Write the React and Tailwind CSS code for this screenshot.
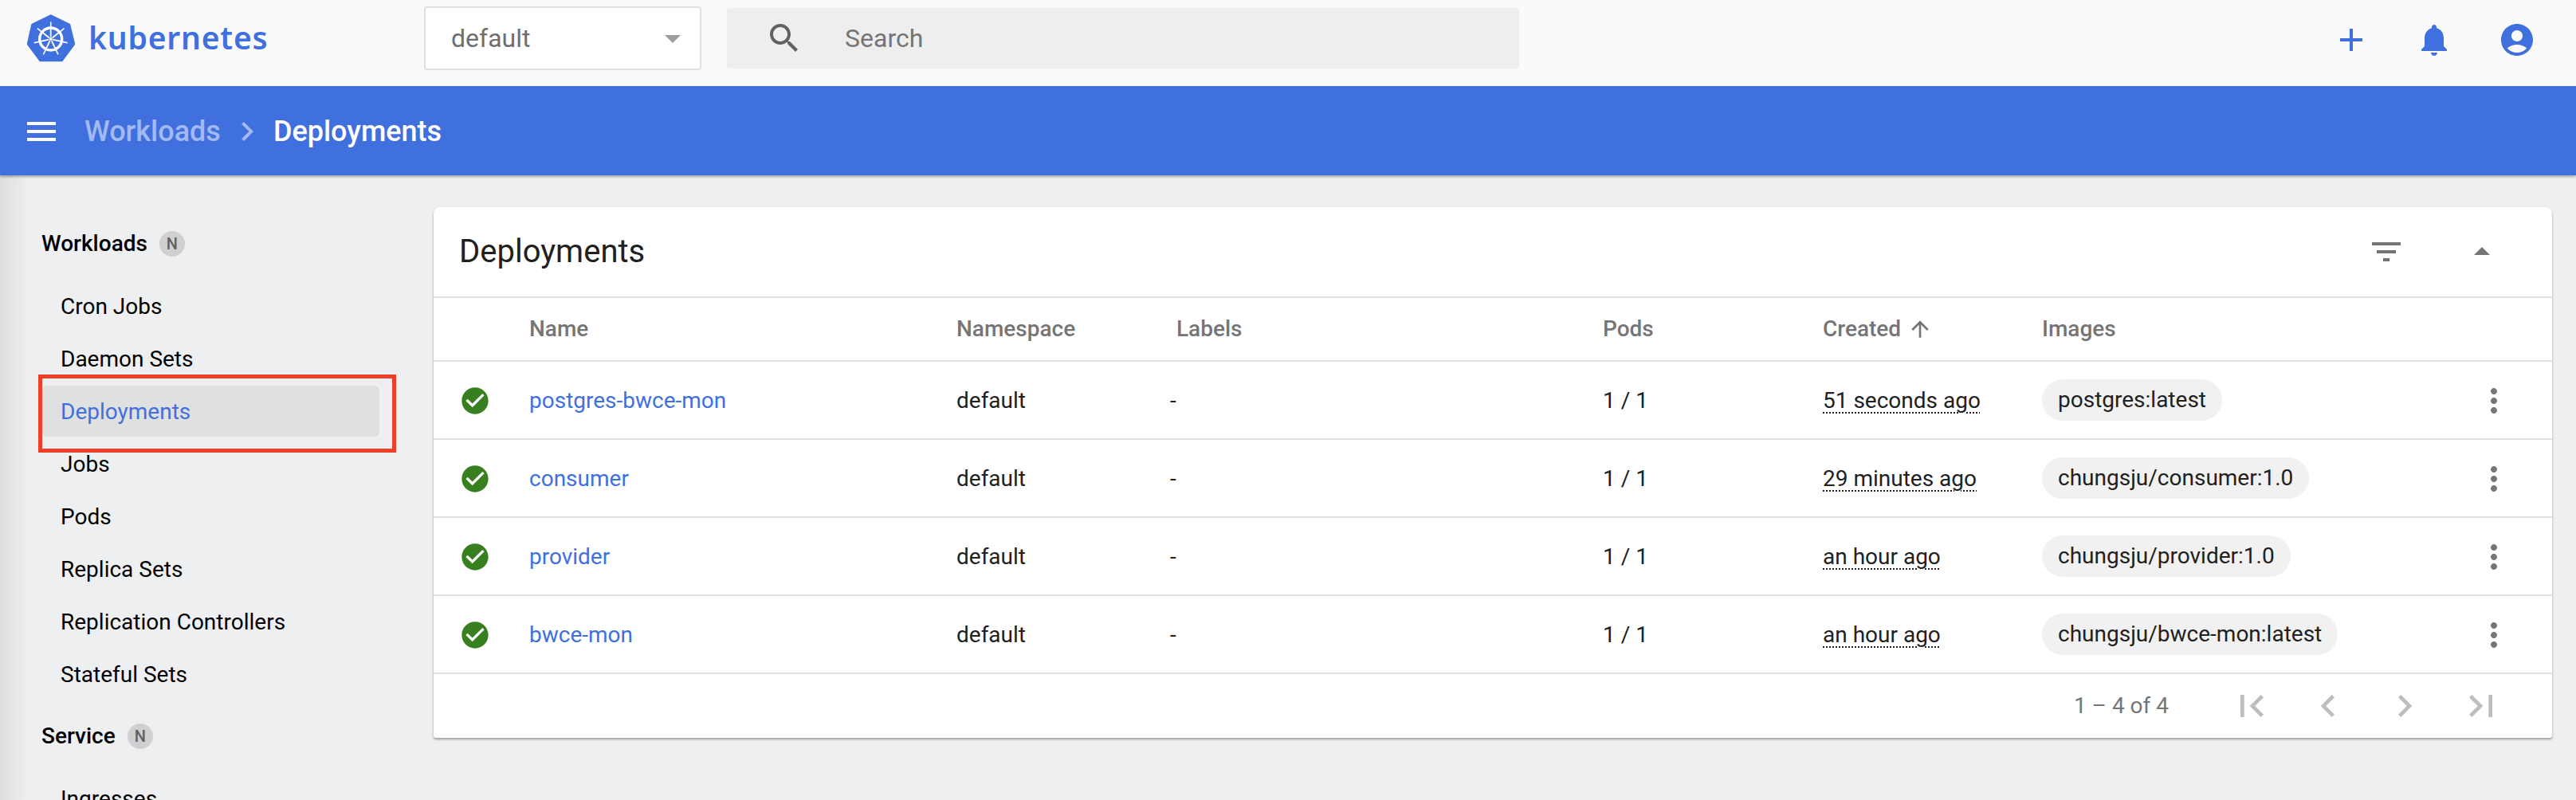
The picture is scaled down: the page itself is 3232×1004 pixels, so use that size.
// App.jsx
import React from "react";

const paths = {
  add: "M19 13h-6v6h-2v-6H5v-2h6V5h2v6h6v2z",
  bell: "M12 22c1.1 0 2-.9 2-2h-4c0 1.1.89 2 2 2zm6-6v-5c0-3.07-1.64-5.64-4.5-6.32V4c0-.83-.67-1.5-1.5-1.5s-1.5.67-1.5 1.5v.68C7.63 5.36 6 7.92 6 11v5l-2 2v1h16v-1l-2-2z",
  account: "M12 2C6.48 2 2 6.48 2 12s4.48 10 10 10 10-4.48 10-10S17.52 2 12 2zm0 4c1.93 0 3.5 1.57 3.5 3.5S13.93 13 12 13s-3.5-1.57-3.5-3.5S10.07 6 12 6zm0 14c-2.03 0-4.43-.82-6.14-2.88C7.55 15.8 9.68 15 12 15s4.45.8 6.14 2.12C16.43 19.18 14.03 20 12 20z",
  menu: "M3 18h18v-2H3v2zm0-5h18v-2H3v2zm0-7v2h18V6H3z",
  chevronRight: "M10 6L8.59 7.41 13.17 12l-4.58 4.59L10 18l6-6z",
  chevronLeft: "M15.41 7.41L14 6l-6 6 6 6 1.41-1.41L10.83 12z",
  search: "M15.5 14h-.79l-.28-.27C15.41 12.59 16 11.11 16 9.5 16 5.91 13.09 3 9.5 3S3 5.91 3 9.5 5.91 16 9.5 16c1.61 0 3.09-.59 4.23-1.57l.27.28v.79l5 4.99L20.49 19l-4.99-5zm-6 0C7.01 14 5 11.99 5 9.5S7.01 5 9.5 5 14 7.01 14 9.5 11.99 14 9.5 14z",
  filter: "M10 18h4v-2h-4v2zM3 6v2h18V6H3zm3 7h12v-2H6v2z",
  dropUp: "M7 14l5-5 5 5z",
  dropDown: "M7 10l5 5 5-5z",
  check: "M12 2C6.48 2 2 6.48 2 12s4.48 10 10 10 10-4.48 10-10S17.52 2 12 2zm-2 15l-5-5 1.41-1.41L10 14.17l7.59-7.59L19 8l-9 9z",
  more: "M12 8c1.1 0 2-.9 2-2s-.9-2-2-2-2 .9-2 2 .9 2 2 2zm0 2c-1.1 0-2 .9-2 2s.9 2 2 2 2-.9 2-2-.9-2-2-2zm0 6c-1.1 0-2 .9-2 2s.9 2 2 2 2-.9 2-2-.9-2-2-2z",
  arrowUp: "M4 12l1.41 1.41L11 7.83V20h2V7.83l5.58 5.59L20 12l-8-8-8 8z",
  first: "M18.41 16.59L13.82 12l4.59-4.59L17 6l-6 6 6 6zM6 6h2v12H6z",
  last: "M5.59 7.41L10.18 12l-4.59 4.59L7 18l6-6-6-6zM16 6h2v12h-2z",
};

function Icon({ name, className }) {
  return (
    <svg viewBox="0 0 24 24" fill="currentColor" className={className}>
      <path d={paths[name]} />
    </svg>
  );
}

// helm wheel: ring, seven spokes and a handle past the rim on each spoke
function Logo() {
  const cx = 29.7;
  const cy = 31;
  const spokes = [0, 1, 2, 3, 4, 5, 6].map((i) => {
    const a = ((-90 + (i * 360) / 7) * Math.PI) / 180;
    return [Math.cos(a), Math.sin(a)];
  });
  return (
    <svg viewBox="0 0 60 60" className="w-[60px] h-[60px] shrink-0">
      <polygon
        points="29.5,1.5 53,12.8 59,37.3 43.6,58 16.4,58 1,37.3 6.5,12.8"
        fill="#406fde"
        stroke="#406fde"
        strokeWidth="2.5"
        strokeLinejoin="round"
      />
      <circle cx={cx} cy={cy} r="14" fill="none" stroke="#fff" strokeWidth="3.4" />
      {spokes.map(([x, y], i) => (
        <g key={i} stroke="#fff">
          <line x1={cx + x * 2.5} y1={cy + y * 2.5} x2={cx + x * 14} y2={cy + y * 14} strokeWidth="1.8" />
          <line x1={cx + x * 14} y1={cy + y * 14} x2={cx + x * 21.5} y2={cy + y * 21.5} strokeWidth="1.6" />
        </g>
      ))}
      <circle cx={cx} cy={cy} r="2" fill="#fff" />
    </svg>
  );
}

function TopBar() {
  return (
    <div className="h-[108px] bg-[#fafafa] flex items-center pb-3 shrink-0">
      <div className="flex items-center pl-[34px] w-[532px] gap-[17px]">
        <Logo />
        <span className="font-['Noto_Sans',sans-serif] font-semibold text-[39px] leading-none tracking-[0.8px] text-[#406fde] pb-1">
          kubernetes
        </span>
      </div>
      <div className="w-[348px] h-[80px] border-2 border-[#e0e0e0] rounded bg-white flex items-center pl-8 pr-[22px] justify-between text-[#6e6e6e] text-[32px]">
        <span>default</span>
        <Icon name="dropDown" className="w-12 h-12 text-[#9e9e9e] -mr-3" />
      </div>
      <div className="ml-8 w-[994px] h-[76px] bg-[#eeeeee] rounded flex items-center pl-12 gap-[52px]">
        <Icon name="search" className="w-12 h-12 text-[#616161]" />
        <span className="text-[32px] text-[#757575]">Search</span>
      </div>
      <div className="ml-auto mt-1 flex items-center gap-14 pr-[50px] text-[#406fde]">
        <Icon name="add" className="w-12 h-12" />
        <Icon name="bell" className="w-12 h-12" />
        <Icon name="account" className="w-12 h-12" />
      </div>
    </div>
  );
}

function BlueBar() {
  return (
    <div className="relative z-10 h-[112px] bg-[#406fde] shadow-[0_2px_3px_rgba(0,0,0,0.3)] flex items-center pl-7 pt-[2px] shrink-0 text-[36px] font-medium">
      <Icon name="menu" className="w-12 h-12 text-white" />
      <span className="ml-[30px] text-[#a3b9f2]">Workloads</span>
      <Icon name="chevronRight" className="w-12 h-12 ml-[9px] text-[#a3b9f2]" />
      <span className="ml-[9px] text-white">Deployments</span>
    </div>
  );
}

function SideHeading({ label }) {
  return (
    <div className="h-[66px] flex items-center pl-[52px] gap-[15px]">
      <span className="text-[28px] font-medium text-black">{label}</span>
      <span className="w-8 h-8 rounded-full bg-[#cfd0d2] text-[#616161] text-[20px] font-medium flex items-center justify-center">
        N
      </span>
    </div>
  );
}

function SideItem({ label, active }) {
  return (
    <div className="h-[66px] pt-[2px] ml-[53px] w-[423px] relative">
      <div
        className={
          active
            ? "h-16 pl-[23px] flex items-center rounded-md bg-[#e0e0e0] text-[#406fde] text-[28px] -mt-px"
            : "h-16 pl-[23px] flex items-center text-black text-[28px]"
        }
      >
        {active ? <span className="pt-px">{label}</span> : label}
      </div>
      {active && (
        <div className="absolute left-[-5px] right-[-21px] top-[-13px] bottom-[-19px] border-[5px] border-[#ee4028]" />
      )}
    </div>
  );
}

function Sidebar() {
  return (
    <aside className="w-[544px] shrink-0 pt-[53px] bg-[linear-gradient(90deg,#dddee0_0px,#eeeff1_36px)]">
      <SideHeading label="Workloads" />
      <div className="mt-3">
        {["Cron Jobs", "Daemon Sets"].map((l) => (
          <SideItem key={l} label={l} />
        ))}
        <SideItem label="Deployments" active />
        {["Jobs", "Pods", "Replica Sets", "Replication Controllers", "Stateful Sets"].map((l) => (
          <SideItem key={l} label={l} />
        ))}
      </div>
      <div className="mt-3">
        <SideHeading label="Service" />
      </div>
      <div className="mt-3">
        <SideItem label="Ingresses" />
      </div>
    </aside>
  );
}

const rowGrid = "grid grid-cols-[120px_536px_276px_535px_276px_275px_1fr_121px] items-center border-b-2 border-[#e0e0e0]";

const deployments = [
  { name: "postgres-bwce-mon", created: "51 seconds ago", image: "postgres:latest" },
  { name: "consumer", created: "29 minutes ago", image: "chungsju/consumer:1.0" },
  { name: "provider", created: "an hour ago", image: "chungsju/provider:1.0" },
  { name: "bwce-mon", created: "an hour ago", image: "chungsju/bwce-mon:latest" },
];

function DeploymentRow({ d }) {
  return (
    <div className={rowGrid + " h-[98px] pt-[2px] text-[28px] text-[#212121]"}>
      <div className="pl-[32px]">
        <Icon name="check" className="w-10 h-10 text-[#38801f]" />
      </div>
      <a className="text-[#406fde]">{d.name}</a>
      <div>default</div>
      <div className="-ml-2">-</div>
      <div>1 / 1</div>
      <div className="underline decoration-dotted decoration-2 underline-offset-[5px]">{d.created}</div>
      <div className="-mt-[2px]">
        <span className="inline-flex items-center h-[52px] px-5 rounded-[26px] bg-[#f1f1f1]">{d.image}</span>
      </div>
      <div className="pl-6">
        <Icon name="more" className="w-12 h-12 text-[#757575]" />
      </div>
    </div>
  );
}

function DeploymentsCard() {
  return (
    <section className="bg-white rounded-t-lg rounded-b-[3px] shadow-[0_2px_3px_rgba(0,0,0,0.35)]">
      <div className="h-[114px] flex items-center pl-[32px] border-b-2 border-[#e0e0e0]">
        <h1 className="text-[40px] text-[#212121]">Deployments</h1>
        <Icon name="filter" className="w-12 h-12 ml-auto text-[#757575]" />
        <Icon name="dropUp" className="w-12 h-12 ml-[72px] mr-[64px] text-[#757575]" />
      </div>
      <div className={rowGrid + " h-[80px] text-[28px] font-medium text-[#757575]"}>
        <div />
        <div>Name</div>
        <div>Namespace</div>
        <div>Labels</div>
        <div>Pods</div>
        <div className="flex items-center gap-2">
          Created
          <Icon name="arrowUp" className="w-8 h-8" />
        </div>
        <div>Images</div>
        <div />
      </div>
      {deployments.map((d) => (
        <DeploymentRow key={d.name} d={d} />
      ))}
      <div className="h-[80px] flex items-center justify-end pr-[61px] text-[#757575] text-[28px]">
        <span className="mr-[76px]">1 – 4 of 4</span>
        <div className="flex items-center gap-10 text-[#bdbdbd]">
          <Icon name="first" className="w-14 h-14" />
          <Icon name="chevronLeft" className="w-14 h-14" />
          <Icon name="chevronRight" className="w-14 h-14" />
          <Icon name="last" className="w-14 h-14" />
        </div>
      </div>
    </section>
  );
}

export default function App() {
  return (
    <div className="h-screen overflow-hidden flex flex-col bg-[#eeeff1] font-[Roboto,sans-serif]">
      <TopBar />
      <BlueBar />
      <div className="flex flex-1 min-h-0 overflow-hidden">
        <Sidebar />
        <main className="flex-1 pt-10 pr-[30px]">
          <DeploymentsCard />
        </main>
      </div>
    </div>
  );
}
